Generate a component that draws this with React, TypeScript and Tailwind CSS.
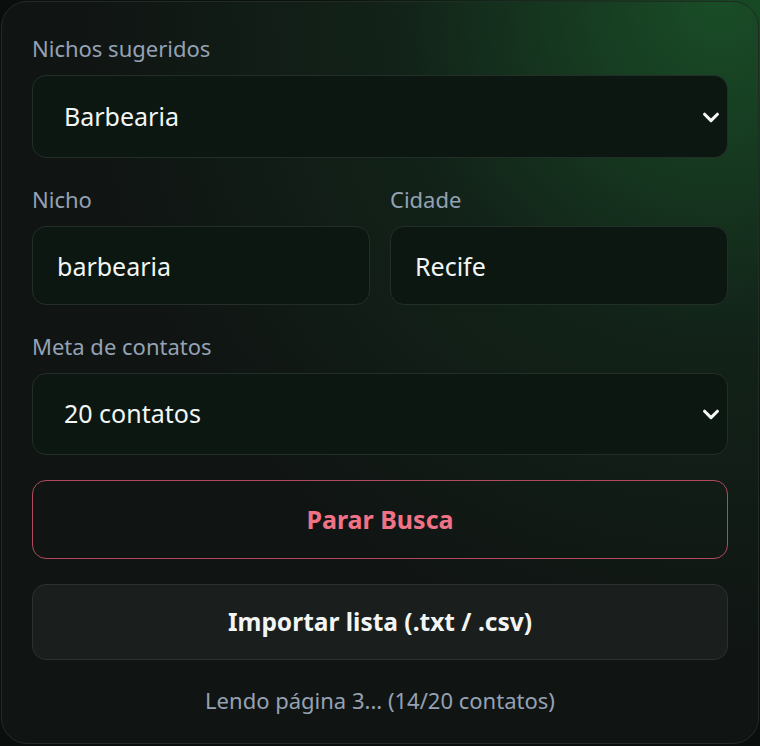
import React from "react";

const font = { fontFamily: '"Noto Sans", "Open Sans", sans-serif' };

function Chevron() {
  return (
    <svg
      className="pointer-events-none absolute right-[6px] top-1/2 -translate-y-1/2"
      width="22"
      height="22"
      viewBox="0 0 24 24"
      fill="none"
      stroke="#f5f7f6"
      strokeWidth="3.4"
      strokeLinecap="round"
      strokeLinejoin="round"
    >
      <path d="M5 9l7 7 7-7" />
    </svg>
  );
}

function Label({ children }: { children: React.ReactNode }) {
  return (
    <div className="mb-[14px] text-[22px] leading-[26px] text-[#95a1b4]">{children}</div>
  );
}

function Select({ value, options, h }: { value: string; options: string[]; h: string }) {
  return (
    <div className="relative">
      <select
        defaultValue={value}
        className={`block w-full appearance-none rounded-[14px] border border-[#242e29] bg-[#0d1712] pl-[31px] pr-10 text-[25px] text-[#f2f6f4] outline-none ${h}`}
        style={font}
      >
        {options.map((o) => (
          <option key={o}>{o}</option>
        ))}
      </select>
      <Chevron />
    </div>
  );
}

function Input({ value }: { value: string }) {
  return (
    <input
      readOnly
      value={value}
      className="block h-[79px] w-full rounded-[14px] border border-[#242e29] bg-[#0d1712] px-[24px] text-[25px] text-[#f2f6f4] outline-none"
      style={font}
    />
  );
}

export default function App() {
  return (
    <div
      className="min-h-screen bg-[#0a0e0c] bg-[radial-gradient(ellipse_at_100%_0%,rgba(24,80,38,0.9)_0%,rgba(14,30,20,0.3)_40%,transparent_65%)] p-px"
      style={font}
    >
      <div className="h-[743px] rounded-[26px] border border-[#222b26] bg-[#101513] bg-[radial-gradient(ellipse_at_95%_0%,rgba(26,80,40,0.95)_0%,rgba(20,48,30,0.5)_32%,rgba(16,21,19,0)_62%)] px-[30px] pt-[33px]">
        <Label>Nichos sugeridos</Label>
        <Select value="Barbearia" options={["Barbearia", "Salão de beleza", "Academia"]} h="h-[83px]" />

        <div className="mt-[28px] grid grid-cols-2 gap-[20px]">
          <div>
            <Label>Nicho</Label>
            <Input value="barbearia" />
          </div>
          <div>
            <Label>Cidade</Label>
            <Input value="Recife" />
          </div>
        </div>

        <div className="mt-[28px]">
          <Label>Meta de contatos</Label>
          <Select value="20 contatos" options={["10 contatos", "20 contatos", "50 contatos"]} h="h-[82px]" />
        </div>

        <button
          className="mt-[25px] flex h-[79px] w-full items-center justify-center rounded-[14px] border border-[#b04a5c] bg-transparent text-[25px] font-bold text-[#f07287]"
          style={font}
        >
          Parar Busca
        </button>

        <button
          className="mt-[25px] flex h-[76px] w-full items-center justify-center rounded-[14px] border border-[#2a312e] bg-[#1a1f1d] text-[24.5px] font-bold text-[#f2f5f4]"
          style={font}
        >
          Importar lista (.txt / .csv)
        </button>

        <div className="mt-[26px] text-center text-[22px] leading-[28px] text-[#95a1b4]">
          Lendo página 3... (14/20 contatos)
        </div>
      </div>
    </div>
  );
}
